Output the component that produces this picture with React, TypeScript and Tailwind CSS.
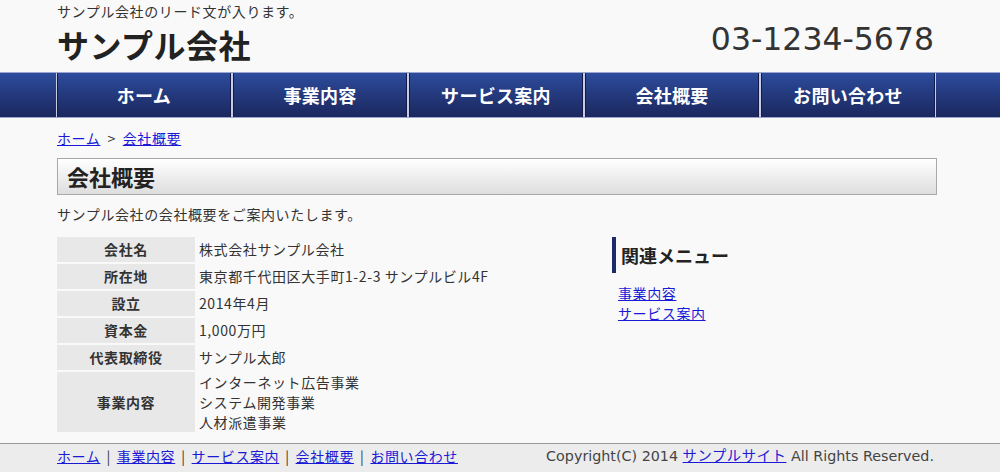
const navItems = ['ホーム', '事業内容', 'サービス案内', '会社概要', 'お問い合わせ'];

const profile: { label: string; value: string[] }[] = [
  { label: '会社名', value: ['株式会社サンプル会社'] },
  { label: '所在地', value: ['東京都千代田区大手町1-2-3 サンプルビル4F'] },
  { label: '設立', value: ['2014年4月'] },
  { label: '資本金', value: ['1,000万円'] },
  { label: '代表取締役', value: ['サンプル太郎'] },
  { label: '事業内容', value: ['インターネット広告事業', 'システム開発事業', '人材派遣事業'] },
];

const jp = 'font-["Noto_Sans_CJK_JP",sans-serif]';

export default function App() {
  return (
    <div className={`${jp} h-[472px] overflow-hidden bg-[#f9f9f9] text-[#333] flex flex-col`}>
      {/* header */}
      <header className="w-[880px] ml-[57px] flex items-start justify-between h-[72px] shrink-0">
        <div>
          <p className="text-[14px] leading-[20px] pt-[1px] tracking-[0.6px]">サンプル会社のリード文が入ります。</p>
          <h1 className="text-[32px] font-bold leading-[46px] tracking-[0.5px] text-[#222]">サンプル会社</h1>
        </div>
        <p className='font-["DejaVu_Sans",sans-serif] text-[31.5px] leading-[36px] mt-[21px] mr-[3px] text-[#333]'>
          03-1234-5678
        </p>
      </header>

      {/* global nav */}
      <nav className="h-[46px] shrink-0 bg-gradient-to-b from-[#2d4c9d] to-[#1b275e] border-y border-[#9aa6cf]">
        <ul className="w-[880px] ml-[56px] h-full flex">
          {navItems.map((item) => (
            <li
              key={item}
              className="flex-1 h-full flex items-center justify-center border-x border-[#c9cde2] shadow-[inset_1px_0_0_#121b4c,inset_-1px_0_0_#121b4c] text-white text-[18px] font-bold tracking-[0.3px]"
            >
              {item}
            </li>
          ))}
        </ul>
      </nav>

      <main className="w-[880px] ml-[57px] flex-1 tracking-[0.6px]">
        <div className="text-[14px] leading-[20px] mt-[10px]">
          <a href="#" className="text-[#1a1ad6] underline">ホーム</a>
          <span className="mx-[7px]">&gt;</span>
          <a href="#" className="text-[#1a1ad6] underline">会社概要</a>
        </div>

        <h2 className="mt-[10px] h-[37px] border border-[#a8a8a8] bg-gradient-to-b from-white to-[#dedede] px-[9px] flex items-center text-[22px] font-bold text-[#222] tracking-normal">
          会社概要
        </h2>

        <p className="text-[14px] leading-[20px] mt-[9px]">サンプル会社の会社概要をご案内いたします。</p>

        <div className="flex mt-[13px]">
          <table className="w-[540px] text-[14px] border-separate border-spacing-0">
            <tbody>
              {profile.map((row) => {
                const multi = row.value.length > 1;
                return (
                  <tr key={row.label}>
                    <th className="w-[138px] bg-[#e8e8e8] font-bold border-b-2 border-[#f9f9f9] py-[3px] leading-[19px] text-center">
                      {row.label}
                    </th>
                    <td className={`pl-[4px] border-b-2 border-[#f9f9f9] text-left ${multi ? 'py-0 leading-[20px]' : 'py-[3px] leading-[19px]'}`}>
                      {row.value.map((v) => (
                        <div key={v}>{v}</div>
                      ))}
                    </td>
                  </tr>
                );
              })}
            </tbody>
          </table>

          <aside className="ml-[15px] flex-1">
            <h3 className="border-l-4 border-[#1c2a6a] pl-[5px] h-[36px] flex items-center text-[18px] font-bold text-[#222] tracking-normal">
              関連メニュー
            </h3>
            <ul className="mt-[10px] pl-[6px] text-[14px] leading-[20px]">
              <li><a href="#" className="text-[#1a1ad6] underline">事業内容</a></li>
              <li><a href="#" className="text-[#1a1ad6] underline">サービス案内</a></li>
            </ul>
          </aside>
        </div>
      </main>

      <footer className="shrink-0 border-t border-[#9a9a9a] bg-[#ececec] h-[29px]">
        <div className="w-[880px] ml-[57px] flex items-center justify-between h-full text-[14px] pb-[4px]">
          <div className="tracking-[0.6px]">
            {navItems.map((item, i) => (
              <span key={item}>
                {i > 0 && <span className="mx-[6px]">|</span>}
                <a href="#" className="text-[#1a1ad6] underline">{item}</a>
              </span>
            ))}
          </div>
          <p className='font-["DejaVu_Sans","Noto_Sans_CJK_JP",sans-serif] text-[14.3px] text-[#444] mr-[3px]'>
            Copyright(C) 2014 <a href="#" className='text-[#1a1ad6] underline font-["Noto_Sans_CJK_JP",sans-serif] tracking-[0.6px]'>サンプルサイト</a> All Rights Reserved.
          </p>
        </div>
      </footer>
    </div>
  );
}
